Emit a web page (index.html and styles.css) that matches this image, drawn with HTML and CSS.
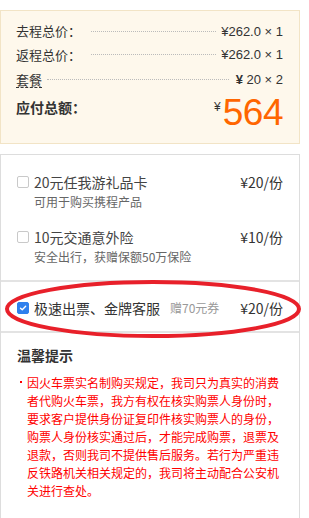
FILE: index.html
```html
<!DOCTYPE html>
<html lang="zh-CN">
<head>
<meta charset="utf-8">
<title>订单总价</title>
<link rel="stylesheet" href="styles.css">
</head>
<body>
<div class="page">
  <section class="summary">
    <div class="row r1">
      <span class="label">去程总价：</span>
      <span class="leader"></span>
      <span class="value">¥262.0 × 1</span>
    </div>
    <div class="row r2">
      <span class="label">返程总价：</span>
      <span class="leader"></span>
      <span class="value">¥262.0 × 1</span>
    </div>
    <div class="row r3">
      <span class="label pkg">套餐</span>
      <span class="leader"></span>
      <span class="value"><b class="yen">¥</b> 20 × 2</span>
    </div>
    <div class="total">
      <span class="total-label">应付总额：</span>
      <span class="total-amount"><span class="total-yen">¥</span><span class="total-num">564</span></span>
    </div>
  </section>

  <section class="extras">
    <div class="options">
      <div class="option">
        <div class="opt-main">
          <span class="check"></span>
          <span class="opt-title">20元任我游礼品卡</span>
          <span class="opt-price">¥20/份</span>
        </div>
        <div class="opt-sub">可用于购买携程产品</div>
      </div>
      <div class="option">
        <div class="opt-main">
          <span class="check"></span>
          <span class="opt-title">10元交通意外险</span>
          <span class="opt-price">¥10/份</span>
        </div>
        <div class="opt-sub">安全出行，获赠保额50万保险</div>
      </div>
    </div>

    <div class="vip">
      <span class="check checked">
        <svg viewBox="0 0 12 12" width="12" height="12"><path d="M3 6.2 L5.1 8.2 L9.2 3.9" fill="none" stroke="#fff" stroke-width="1.6" stroke-linecap="round" stroke-linejoin="round"/></svg>
      </span>
      <span class="vip-title">极速出票、金牌客服</span>
      <span class="vip-gift">赠70元券</span>
      <span class="opt-price">¥20/份</span>
      <svg class="circle" viewBox="0 0 298 60" width="298" height="60"><ellipse cx="149" cy="30" rx="146" ry="27" fill="none" stroke="#e8202a" stroke-width="4"/></svg>
    </div>

    <div class="tips">
      <h3 class="tips-title">温馨提示</h3>
      <ul class="tips-list">
        <li>因火车票实名制购买规定，我司只为真实的消费者代购火车票，我方有权在核实购票人身份时，要求客户提供身份证复印件核实购票人的身份，购票人身份核实通过后，才能完成购票，退票及退款，否则我司不提供售后服务。若行为严重违反铁路机关相关规定的，我司将主动配合公安机关进行查处。</li>
      </ul>
    </div>
  </section>
</div>
</body>
</html>
```

FILE: styles.css
```css
* { box-sizing: border-box; }

html, body {
  margin: 0;
  padding: 0;
  background: #fff;
}

body {
  font-family: "Noto Sans CJK SC", "Noto Sans", sans-serif;
  color: #333;
  width: 309px;
  height: 518px;
  overflow: hidden;
}

.page {
  width: 300px;
  padding-top: 10px;
}

/* ---------- summary box ---------- */
.summary {
  background: #fef8ec;
  border: 1px solid #f2e4c6;
  padding: 8px 16px 10px 15px;
}

.row {
  display: flex;
  align-items: center;
  font-size: 13px;
  color: #333;
}
.r1 { height: 24px; }
.r2 { height: 23px; }
.r3 { height: 27px; }

.label {
  line-height: 16px;
  white-space: nowrap;
}

.pkg {
  border-bottom: 1px dashed #333;
  line-height: 15px;
}

.leader {
  flex: 1;
  border-bottom: 1px dotted #bbb;
  margin: 0 5px 0 10px;
  height: 0;
}
.r3 .leader { margin-left: 5px; margin-right: 7px; }

.value {
  font-family: "Liberation Sans", "Noto Sans", sans-serif;
  font-size: 13px;
  white-space: nowrap;
  color: #333;
}
.yen { font-weight: bold; }

.total {
  display: flex;
  justify-content: space-between;
  align-items: flex-start;
  height: 40px;
}

.total-label {
  font-size: 14px;
  font-weight: bold;
  line-height: 26px;
  margin-top: 1px;
  color: #333;
}

.total-amount {
  display: flex;
  align-items: flex-start;
  color: #ff6600;
}

.total-yen {
  font-family: "Liberation Sans", sans-serif;
  font-size: 12px;
  line-height: 13px;
  margin-top: 8px;
  margin-right: 2px;
  color: #333;
}

.total-num {
  font-family: "Liberation Sans", sans-serif;
  font-size: 37px;
  line-height: 40px;
  letter-spacing: -0.5px;
}

/* ---------- extras box ---------- */
.extras {
  margin-top: 10px;
  border: 1px solid #ddd;
  border-bottom: none;
  height: 364px;
}

.options {
  padding: 17px 16px 13px 16px;
  border-bottom: 2px solid #e3e3e3;
  display: flex;
  flex-direction: column;
  gap: 15px;
}

.opt-main {
  display: flex;
  align-items: center;
  height: 20px;
}

.check {
  width: 12px;
  height: 12px;
  border: 1px solid #c9c9c9;
  border-radius: 2px;
  background: #fff;
  flex: none;
  margin-right: 5px;
  display: flex;
  align-items: center;
  justify-content: center;
}

.check.checked {
  background: #2f80ed;
  border-color: #2f80ed;
}
.check.checked svg { display: block; }

.opt-title {
  font-size: 14px;
  line-height: 20px;
  color: #444;
  flex: 1;
}

.opt-price {
  font-size: 14px;
  line-height: 20px;
  color: #333;
  white-space: nowrap;
}

.opt-sub {
  font-size: 12px;
  line-height: 20px;
  color: #666;
  padding-left: 17px;
}

.vip {
  position: relative;
  display: flex;
  align-items: center;
  padding: 16px 16px 13px 16px;
  border-bottom: 2px solid #e3e3e3;
}

.vip-title {
  font-size: 14px;
  line-height: 20px;
  color: #333;
}

.vip-gift {
  font-size: 12px;
  line-height: 20px;
  color: #999;
  margin-left: 10px;
  flex: 1;
}

.circle {
  position: absolute;
  left: 3px;
  top: -3px;
  pointer-events: none;
}

.tips {
  padding: 13px 16px 0 16px;
}

.tips-title {
  margin: 0;
  font-size: 14px;
  font-weight: bold;
  line-height: 18px;
  color: #333;
}

.tips-list {
  list-style: none;
  margin: 10px 0 0 0;
  padding: 0 0 0 10px;
}

.tips-list li {
  position: relative;
  font-size: 12px;
  line-height: 18px;
  color: #ff0000;
}

.tips-list li::before {
  content: "";
  position: absolute;
  left: -7px;
  top: 7px;
  width: 2px;
  height: 2px;
  background: #ff0000;
}
```
